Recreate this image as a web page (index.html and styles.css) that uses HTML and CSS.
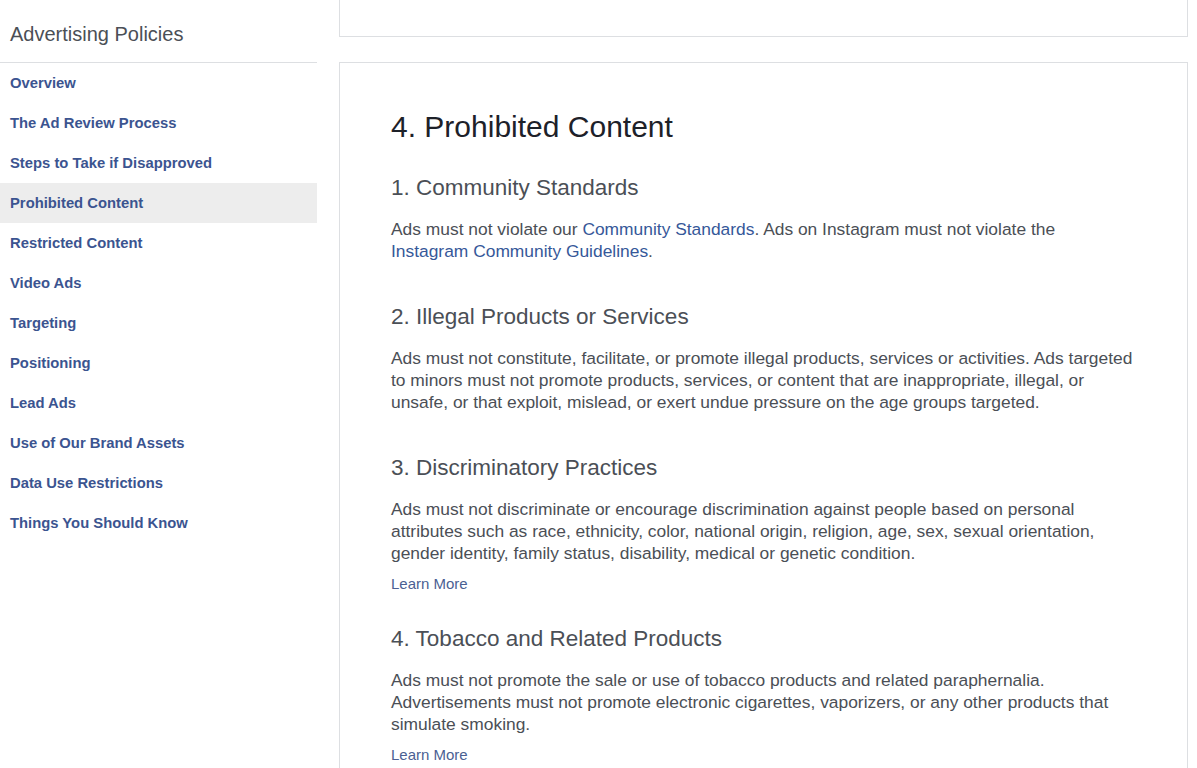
FILE: index.html
```html
<!DOCTYPE html>
<html lang="en">
<head>
<meta charset="utf-8">
<title>Advertising Policies</title>
<link rel="stylesheet" href="styles.css">
</head>
<body>
<div class="page">
  <aside class="sidebar">
    <div class="side-title">Advertising Policies</div>
    <nav class="side-nav">
      <a class="nav-item" href="#">Overview</a>
      <a class="nav-item" href="#">The Ad Review Process</a>
      <a class="nav-item" href="#">Steps to Take if Disapproved</a>
      <a class="nav-item active" href="#">Prohibited Content</a>
      <a class="nav-item" href="#">Restricted Content</a>
      <a class="nav-item" href="#">Video Ads</a>
      <a class="nav-item" href="#">Targeting</a>
      <a class="nav-item" href="#">Positioning</a>
      <a class="nav-item" href="#">Lead Ads</a>
      <a class="nav-item" href="#">Use of Our Brand Assets</a>
      <a class="nav-item" href="#">Data Use Restrictions</a>
      <a class="nav-item" href="#">Things You Should Know</a>
    </nav>
  </aside>
  <main class="main">
    <div class="card card-prev"></div>
    <div class="card card-content">
      <h1 class="h1">4. Prohibited Content</h1>
      <section class="sec">
        <h2 class="h2">1. Community Standards</h2>
        <p class="p">Ads must not violate our <a class="link" href="#">Community Standards</a>. Ads on Instagram must not violate the <a class="link" href="#">Instagram Community Guidelines</a>.</p>
      </section>
      <section class="sec">
        <h2 class="h2">2. Illegal Products or Services</h2>
        <p class="p">Ads must not constitute, facilitate, or promote illegal products, services or activities. Ads targeted to minors must not promote products, services, or content that are inappropriate, illegal, or unsafe, or that exploit, mislead, or exert undue pressure on the age groups targeted.</p>
      </section>
      <section class="sec">
        <h2 class="h2">3. Discriminatory Practices</h2>
        <p class="p">Ads must not discriminate or encourage discrimination against people based on personal attributes such as race, ethnicity, color, national origin, religion, age, sex, sexual orientation, gender identity, family status, disability, medical or genetic condition.</p>
        <a class="more" href="#">Learn More</a>
      </section>
      <section class="sec">
        <h2 class="h2">4. Tobacco and Related Products</h2>
        <p class="p">Ads must not promote the sale or use of tobacco products and related paraphernalia. Advertisements must not promote electronic cigarettes, vaporizers, or any other products that simulate smoking.</p>
        <a class="more" href="#">Learn More</a>
      </section>
    </div>
  </main>
</div>
</body>
</html>
```

FILE: styles.css
```css
html, body {
  margin: 0;
  padding: 0;
  background: #ffffff;
  font-family: "Liberation Sans", Arial, Helvetica, sans-serif;
}

.page {
  display: flex;
  align-items: flex-start;
  gap: 22px;
  height: 768px;
  overflow: hidden;
}

.sidebar {
  width: 317px;
  flex: none;
}

.side-title {
  font-size: 20px;
  line-height: 24px;
  color: #4b4f56;
  padding: 22px 0 16px 10px;
  border-bottom: 1px solid #dddfe2;
}

.side-nav {
  display: flex;
  flex-direction: column;
}

.nav-item {
  display: block;
  height: 40px;
  line-height: 40px;
  padding-left: 10px;
  font-size: 14.8px;
  font-weight: bold;
  color: #3b5490;
  text-decoration: none;
}

.nav-item.active {
  background: #ededed;
}

.main {
  width: 849px;
  flex: none;
  display: flex;
  flex-direction: column;
  gap: 25px;
}

.card {
  background: #ffffff;
  border: 1px solid #dddfe2;
}

.card-prev {
  border-top: none;
  height: 36px;
}

.card-content {
  padding: 47px 51px 40px;
}

.h1 {
  margin: 0 0 30px;
  font-size: 30px;
  line-height: 34px;
  font-weight: normal;
  color: #1d2129;
}

.sec {
  margin-bottom: 30px;
}

.h2 {
  margin: 0 0 16px;
  font-size: 22.5px;
  line-height: 28px;
  font-weight: normal;
  color: #4b4f56;
}

.p {
  margin: 0 0 11px;
  font-size: 17.4px;
  line-height: 22px;
  color: #4b4f56;
}

.p:last-child {
  margin-bottom: 41px;
}

.link {
  color: #365899;
  text-decoration: none;
}

.more {
  display: block;
  font-size: 15px;
  line-height: 18px;
  padding-bottom: 2px;
  color: #4b5f93;
  text-decoration: none;
}
```
